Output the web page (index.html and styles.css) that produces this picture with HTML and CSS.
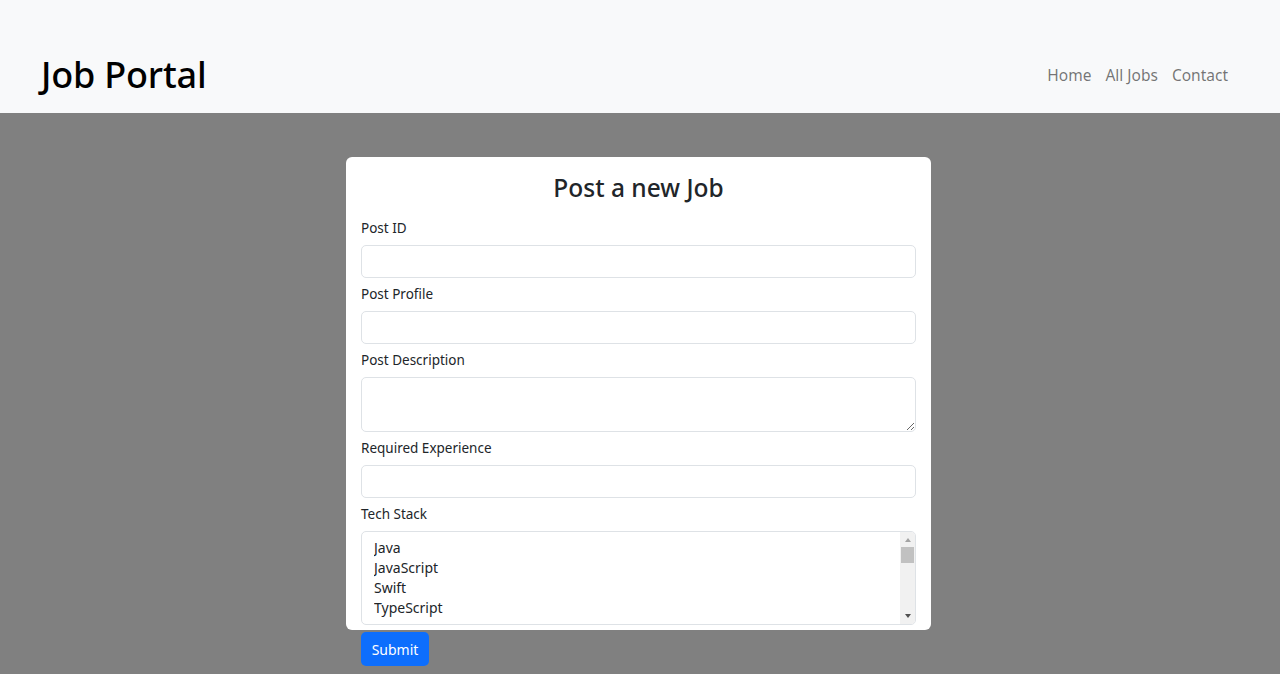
FILE: index.html
```html
<!DOCTYPE html>
<html lang="en">
<head>
<meta charset="utf-8">
<title>Job Portal</title>
<link rel="stylesheet" href="styles.css">
</head>
<body>
<header class="navbar">
  <a class="brand" href="#">Job Portal</a>
  <nav class="nav">
    <a class="nav-link" href="#">Home</a>
    <a class="nav-link" href="#">All Jobs</a>
    <a class="nav-link" href="#">Contact</a>
  </nav>
</header>
<main class="main">
  <form class="card">
    <h3 class="title">Post a new Job</h3>
    <label class="label" for="pid">Post ID</label>
    <input class="control" id="pid" type="text">
    <label class="label" for="pprofile">Post Profile</label>
    <input class="control" id="pprofile" type="text">
    <label class="label" for="pdesc">Post Description</label>
    <textarea class="control textarea" id="pdesc"></textarea>
    <label class="label" for="pexp">Required Experience</label>
    <input class="control" id="pexp" type="text">
    <label class="label" for="ptech">Tech Stack</label>
    <div class="listbox">
      <select class="select" id="ptech" multiple>
        <option>Java</option>
        <option>JavaScript</option>
        <option>Swift</option>
        <option>TypeScript</option>
        <option>Go</option>
        <option>Python</option>
        <option>C</option>
        <option>C++</option>
        <option>C#</option>
        <option>Kotlin</option>
        <option>Rust</option>
        <option>PHP</option>
        <option>Ruby</option>
        <option>Django</option>
        <option>Flutter</option>
        <option>React</option>
        <option>Angular</option>
      </select>
      <div class="scrollbar" aria-hidden="true">
        <span class="arrow up"></span>
        <span class="thumb"></span>
        <span class="arrow down"></span>
      </div>
    </div>
    <button class="btn" type="submit">Submit</button>
  </form>
</main>
</body>
</html>
```
FILE: styles.css
```css
* { box-sizing: border-box; }
html, body {
  margin: 0;
  height: 100%;
}
body {
  font-family: "Noto Sans", "Open Sans", sans-serif;
  color: #212529;
  background: #808080;
  overflow: hidden;
}
.navbar {
  height: 113px;
  background: #f8f9fa;
  display: flex;
  align-items: center;
  justify-content: space-between;
  padding: 36px 45px 0 41px;
}
.brand {
  font-size: 36px;
  font-weight: 500;
  color: #000;
  text-decoration: none;
  letter-spacing: -0.2px;
}
.nav {
  display: flex;
}
.nav-link {
  font-size: 15.5px;
  color: rgba(0,0,0,0.55);
  text-decoration: none;
  padding: 0 7px;
}
.main {
  display: flex;
  justify-content: center;
  padding-top: 44px;
  padding-right: 3px;
}
.card {
  width: 585px;
  height: 473px;
  background: #fff;
  border-radius: 6px;
  padding: 16px 15px 0;
  display: flex;
  flex-direction: column;
}
.title {
  margin: 0 0 15px;
  text-align: center;
  font-size: 24.5px;
  font-weight: 500;
  line-height: 30px;
}
.label {
  font-size: 13.5px;
  line-height: 21px;
  height: 21px;
  margin-bottom: 6px;
}
.control {
  display: block;
  width: 100%;
  height: 33px;
  border: 1px solid #dee2e6;
  border-radius: 5px;
  background: #fff;
  font-family: inherit;
  font-size: 14px;
  margin: 0 0 6px;
  padding: 4px 12px;
  flex-shrink: 0;
}
.textarea {
  height: 55px;
  resize: vertical;
}
.listbox {
  position: relative;
  flex-shrink: 0;
  height: 94px;
  margin-bottom: 6px;
  border: 1px solid #dee2e6;
  border-radius: 5px;
  padding: 6px 15px 6px 12px;
  overflow: hidden;
}
.select {
  display: block;
  width: 100%;
  height: 80px;
  border: none;
  outline: none;
  padding: 0;
  margin: 0;
  background: #fff;
  color: #212529;
  font-family: inherit;
  font-size: 14px;
  overflow: hidden;
}
.select option {
  line-height: 20px;
  height: 20px;
  padding: 0;
}
.scrollbar {
  position: absolute;
  top: 0;
  right: 0;
  bottom: 0;
  width: 15px;
  background: #f1f1f1;
  display: flex;
  flex-direction: column;
  align-items: center;
}
.arrow {
  display: block;
  width: 0;
  height: 0;
  border-left: 3.5px solid transparent;
  border-right: 3.5px solid transparent;
}
.arrow.up {
  margin-top: 6px;
  border-bottom: 4px solid #a3a3a3;
}
.arrow.down {
  margin-top: auto;
  margin-bottom: 6px;
  border-top: 4px solid #505050;
}
.thumb {
  display: block;
  width: 13px;
  height: 16px;
  margin-top: 5px;
  background: #c1c1c1;
}
.btn {
  align-self: flex-start;
  margin-top: 1px;
  width: 68px;
  height: 34px;
  flex-shrink: 0;
  border: none;
  border-radius: 5px;
  background: #0d6efd;
  color: #fff;
  font-family: inherit;
  font-size: 14px;
  padding: 0;
}
```
